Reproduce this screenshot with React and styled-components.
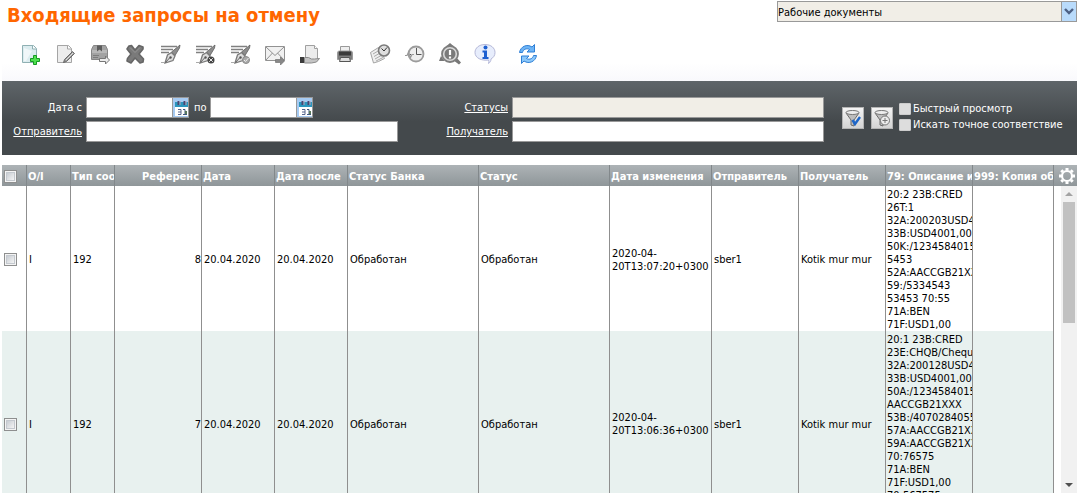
import React from 'react';
import styled, { createGlobalStyle, css } from 'styled-components';

const GlobalStyle = createGlobalStyle`
  * {
    box-sizing: border-box;
  }

  body {
    margin: 0;
    background: #ffffff;
    color: #000000;
    font-family: Tahoma, "DejaVu Sans Condensed", "DejaVu Sans", sans-serif;
    font-size: 11px;
    line-height: 13px;
  }

  input, select, button {
    font: inherit;
  }
`;

const Page = styled.div`
  display: flex;
  flex-direction: column;
  height: 100vh;
  padding: 0 5px 6px 2px;
`;

const Header = styled.header`
  display: flex;
  justify-content: space-between;
  align-items: flex-start;
  height: 36px;
  padding-top: 1px;
`;

const Title = styled.h1`
  margin: 0;
  padding: 2px 0 0 5px;
  color: #ff6600;
  font-size: 20px;
  font-weight: bold;
  line-height: 24px;
  white-space: nowrap;
`;

const SelectBox = styled.div`
  display: grid;
  grid-template-columns: 1fr 15px;
  width: 300px;
  height: 21px;
  border: 1px solid #999999;
  background: #f1eee7;

  select {
    grid-area: 1 / 1 / 2 / 3;
    appearance: none;
    width: 100%;
    padding: 1px 0 0;
    border: 0;
    border-radius: 0;
    background: transparent;
    color: #000000;
  }
`;

const SelectArrow = styled.span`
  grid-area: 1 / 2;
  display: flex;
  align-items: center;
  justify-content: center;
  border-left: 1px solid #999999;
  background: #b9dbfb;
  pointer-events: none;
`;

const Toolbar = styled.div`
  display: flex;
  align-items: center;
  gap: 13px;
  height: 45px;
  padding: 0 0 9px 17px;
  background: linear-gradient(#ffffff 60%, #f9f9fc);
`;

const ToolButton = styled.button`
  width: 22px;
  height: 22px;
  flex: none;
  padding: 0;
  border: 0;
  background: none;
  margin-left: ${({ $apart }) => ($apart ? '8px' : '0')};

  svg {
    display: block;
  }
`;

const FilterPanel = styled.form`
  display: grid;
  grid-template-columns: 80px 1fr 106px 1fr 249px;
  grid-template-rows: 21px 21px;
  column-gap: 4px;
  row-gap: 3px;
  height: 74px;
  padding-top: 16px;
  background: linear-gradient(#5f6569, #44494c 55%, #44494c);
  color: #ffffff;
`;

const FieldLabel = styled.label`
  justify-self: end;
  align-self: center;
`;

const FieldLink = styled.a`
  justify-self: end;
  align-self: center;
  color: #ffffff;
  text-decoration: underline;
`;

const TextField = styled.input`
  width: 100%;
  height: 21px;
  min-width: 0;
  padding: 0 2px;
  border: 1px solid #999999;
  border-radius: 0;
  background: ${({ readOnly }) => (readOnly ? '#f1eee7' : '#ffffff')};
`;

const DateRange = styled.div`
  display: flex;
  align-items: center;

  label {
    padding: 0 3px 0 5px;
  }
`;

const DateBox = styled.div`
  display: flex;
  width: 103px;
  height: 21px;
  border: 1px solid #999999;
  background: #ffffff;

  input {
    flex: 1;
    min-width: 0;
    padding: 0 2px;
    border: 0;
    background: transparent;
  }

  button {
    width: 16px;
    padding: 0;
    border: 0;
    border-left: 1px solid #999999;
    background: #a6cbf3;
  }

  svg {
    display: block;
  }
`;

const FilterActions = styled.div`
  grid-area: 1 / 5 / 3 / 6;
  display: flex;
  align-items: flex-start;
  padding-left: 14px;
`;

const FilterButton = styled.button`
  width: 22px;
  height: 22px;
  flex: none;
  margin: 10px 7px 0 0;
  padding: 0;
  border: 1px solid #b4b4b4;
  background: linear-gradient(#f4f4f4, #d4d4d4);

  svg {
    display: block;
  }

  & + & {
    margin-right: 6px;
  }
`;

const Options = styled.div`
  display: flex;
  flex-direction: column;
  gap: 3px;
  padding-top: 5px;
`;

const Option = styled.label`
  display: flex;
  align-items: center;
  gap: 2px;
  height: 13px;
  white-space: nowrap;

  input {
    appearance: none;
    width: 12px;
    height: 12px;
    margin: 0;
    border: 1px solid #cccccc;
    border-radius: 1px;
    background: #dddddd;
  }
`;

const Grid = styled.section`
  position: relative;
  flex: 1;
  min-height: 0;
  margin-top: 10px;
  overflow: hidden;
`;

const Table = styled.table`
  width: 100%;
  table-layout: fixed;
  border-collapse: separate;
  border-spacing: 0;
`;

const cell = css`
  overflow: hidden;
  border-right: 1px solid #8f8f8f;
  text-align: ${({ $right }) => ($right ? 'right' : 'left')};
`;

const HeadRow = styled.tr`
  background: linear-gradient(#adb3b6, #8f9699);
`;

const HeadCell = styled.th`
  ${cell}
  height: 21px;
  padding: 1px ${({ $right }) => ($right ? '2px' : '0')} 0 1px;
  border-right-color: #82888b;
  color: #ffffff;
  font-weight: bold;
  white-space: nowrap;

  &:last-child {
    border-right: 0;
  }
`;

const BodyRow = styled.tr`
  height: ${({ $height }) => $height}px;

  td {
    background: ${({ $striped }) => ($striped ? '#e8f1ef' : '#ffffff')};
  }

  td:last-child {
    border-right: 0;
    background: #ffffff;
  }
`;

const Cell = styled.td`
  ${cell}
  padding: 2px 0 0 ${({ $details }) => ($details ? '1px' : '2px')};
  vertical-align: ${({ $details }) => ($details ? 'top' : 'middle')};
  white-space: ${({ $details }) => ($details ? 'pre' : 'normal')};
`;

const RowCheck = styled.input`
  display: block;
  appearance: none;
  width: 13px;
  height: 13px;
  margin: 0 0 0 1px;
  padding: 2px;
  border: 1px solid #8e8f8f;
  background: linear-gradient(135deg, #c8cdd3, #f4f4f4) content-box, #f4f4f4;
  box-shadow: inset 0 0 0 1px #f4f4f4, inset 0 0 0 2px #c4c9cf;

  td & {
    margin-left: 0;
  }
`;

const GearButton = styled.button`
  display: block;
  width: 18px;
  height: 18px;
  margin-left: 3px;
  padding: 0;
  border: 0;
  background: none;

  svg {
    display: block;
  }
`;

// Lies over the last, empty column
const ScrollBar = styled.div`
  position: absolute;
  top: 21px;
  right: 0;
  bottom: 0;
  display: flex;
  flex-direction: column;
  width: 16px;
  background: #f1f1f1;
`;

const ScrollButton = styled.button`
  display: flex;
  align-items: center;
  justify-content: center;
  height: 16px;
  flex: none;
  padding: 0;
  border: 0;
  background: none;
`;

const ScrollTrack = styled.div`
  flex: 1;
  padding: 0 2px;
`;

const ScrollThumb = styled.div`
  height: 44%;
  background: #c1c1c1;
`;

const Svg = ({ size = 22, children }) => (
  <svg width={size} height={size} viewBox={`0 0 ${size} ${size}`} fill="none" aria-hidden="true">
    {children}
  </svg>
);

const Sheet = ({ stroke = '#a5a5a5', fill = '#f3f3f3' }) => (
  <>
    <path d="M3.500 2.500h11l3 3v14h-14z" fill={fill} stroke={stroke} />
    <path d="M13.500 2.500v3.500h4" fill="#fff" stroke={stroke} />
  </>
);

const Quill = () => (
  <>
    <path d="M2 3.500h16M2 6.500h12M2 9.500h8" stroke="#808080" strokeWidth="1.300" />
    <path d="M21 2L12.500 9l3.500 3.500L20.500 5z" fill="#8d8d8d" stroke="#5e5e5e" strokeWidth=".8" />
    <path d="M12.500 9.500L8.500 12 6 20l8-2.500 2-4.500z" fill="#dcdcdc" stroke="#7a7a7a" strokeWidth="1.300" />
    <path d="M6.500 19.500l4-4.500" stroke="#666" />
    <circle cx="11.500" cy="14.500" r="1.200" fill="#555" />
    <path d="M2 19.500h4" stroke="#aaa" />
  </>
);

const NewIcon = () => (
  <Svg>
    <Sheet stroke="#8fb0b3" fill="#dcecef" />
    <path d="M5 18V5l8 3-6 10z" fill="#fff" opacity=".6" />
    <path d="M14.500 12.500h3v3h3v3h-3v3h-3v-3h-3v-3h3z" fill="#4ee04e" stroke="#159a22" />
  </Svg>
);

const EditIcon = () => (
  <Svg>
    <Sheet fill="#ededed" />
    <path d="M9.500 19.500l1-3 8-8 2 2-8 8z" fill="#9a9a9a" stroke="#555" strokeWidth=".8" />
    <path d="M12 17l7-7" stroke="#e2e2e2" />
  </Svg>
);

const BoxIcon = () => (
  <Svg>
    <path d="M2.500 6.500l2-4h12l2 4v10h-16z" fill="#a2a2a2" stroke="#868686" />
    <path d="M3 7h15v3H3z" fill="#b8b8b8" />
    <path d="M8 2.500h5v6l-2.500-2-2.500 2z" fill="#5c5c5c" />
    <path d="M4 12.500h6M4 14.500h5" stroke="#7c7c7c" />
    <path d="M10.500 15.500h6v-2.500l4 4-4 4v-2.500h-6z" fill="#ececec" stroke="#777" />
  </Svg>
);

const DeleteIcon = () => (
  <Svg>
    <path d="M5 3l2.500-.5L11 7l4-4.500 4 1.500v2l-4 5 4.500 5-.5 3-3 1L11 15l-4 5-4-2 .5-2.500L7 11 3 6z" fill="#7a7a7a" stroke="#666" strokeWidth="1.600" strokeLinejoin="round" />
    <path d="M6 4.500l5 5 5-5" stroke="#969696" />
  </Svg>
);

const SignIcon = () => (
  <Svg>
    <Quill />
  </Svg>
);

const UnsignIcon = () => (
  <Svg>
    <Quill />
    <circle cx="17" cy="17" r="3.500" fill="#444" />
    <path d="M15.200 15.200l3.600 3.600M18.800 15.200l-3.600 3.600" stroke="#e8e8e8" />
  </Svg>
);

const VerifyIcon = () => (
  <Svg>
    <Quill />
    <circle cx="17" cy="17" r="3.500" fill="#aaa" stroke="#8a8a8a" />
    <path d="M15 17l1.500 1.500 3-3.500" stroke="#eee" />
  </Svg>
);

const MailIcon = () => (
  <Svg>
    <path d="M1.500 3.500h19v14h-19z" fill="#f1f1f1" stroke="#929292" />
    <path d="M2 4l9 8.500L20 4M2 17l6.500-7M20 17l-6.500-7" stroke="#929292" />
    <path d="M11.500 16.500h5v-2.500l4 4-4 4v-2.500h-5z" fill="#888" stroke="#666" strokeWidth=".6" />
  </Svg>
);

const HandIcon = () => (
  <Svg>
    <path d="M6.500 2.500h9l3 3v11h-12z" fill="#ececec" stroke="#a0a0a0" />
    <path d="M15.500 2.500v3h3" stroke="#a0a0a0" fill="#fff" />
    <path d="M1 14h4v6H1z" fill="#3b3b3b" />
    <path d="M5.500 14.500h4l3 1.500h3l5-.5-3 3.500-5 1h-7z" fill="#c4c4c4" stroke="#8a8a8a" />
  </Svg>
);

const PrintIcon = () => (
  <Svg>
    <path d="M6.500 3.500h9v6h-9z" fill="#eee" stroke="#999" />
    <path d="M3.500 9.500q0-1.500 2-1.500h11q2 0 2 1.500v7h-15z" fill="#7d7d7d" stroke="#9a9a9a" />
    <path d="M5 8.500h12v4H5z" fill="#3a3a3a" />
    <path d="M6.500 14.500h9l1 4h-11z" fill="#ddd" stroke="#555" />
  </Svg>
);

const ScheduleIcon = () => (
  <Svg>
    <path d="M1.500 9.500l8-5 6 11-6 3-5 1.500z" fill="#efefef" stroke="#a5a5a5" />
    <path d="M4 11l6-3.500M5 13.500l7-4M6 16l7-4M7 18l7-3.500" stroke="#aaa" />
    <circle cx="15" cy="7.500" r="5.500" fill="#dedede" stroke="#7a7a7a" strokeWidth="1.600" />
    <path d="M12.500 5.500L15 8l3-3.500" stroke="#333" />
  </Svg>
);

const HistoryIcon = () => (
  <Svg>
    <circle cx="12" cy="11" r="7.500" fill="#eee" stroke="#9c9c9c" strokeWidth="1.800" />
    <path d="M12.500 5v6.500h5M6 11.500h1" stroke="#555" />
    <path d="M1 12.500h2l1.500-3 2 5 1.500-3h2" stroke="#999" strokeWidth="1.200" />
  </Svg>
);

const InspectIcon = () => (
  <Svg>
    <path d="M11 0l4 3.500H7zM0 18l2-5 3.500 5zM14 17l3-3 5 5.500-2 2z" fill="#777" />
    <circle cx="11" cy="11" r="8" fill="#d9d9d9" stroke="#7d7d7d" strokeWidth="1.800" />
    <circle cx="11" cy="11" r="5.500" fill="#7a7a7a" />
    <path d="M11 7v5M11 13.500v2" stroke="#fff" strokeWidth="2.200" />
  </Svg>
);

const InfoIcon = () => (
  <Svg>
    <path d="M11 1.500c6 0 10 3.500 10 8 0 3-1.500 5-4 6.500 0 2-1 3.500-2.500 4.500.5-1.500.5-2.500 0-3.500-7 1-13.500-2-13.500-7.500 0-4.500 4-8 10-8z" fill="#e7edfc" stroke="#b5b8d8" />
    <path d="M8.500 7.500h4.500v6.500h1.500v2H8.500v-2H10v-4.500H8.500z" fill="#1d5fd0" />
    <circle cx="11.500" cy="4.500" r="2" fill="#1d5fd0" />
  </Svg>
);

const RefreshIcon = () => (
  <Svg>
    <path d="M2.500 9.500C3.500 3.500 10 .5 15 4l2.500-2.500V9H10l2.500-2.500C9.500 4.800 6 6.500 5.500 9.500z" fill="#6db4f5" stroke="#2f7fd6" strokeLinejoin="round" />
    <path d="M19.500 12.500c-1 6-7.500 9-12.500 5.500L4.500 20.500V13H12l-2.500 2.500c3 1.700 6.500 0 7-3z" fill="#8cc8fa" stroke="#2f7fd6" strokeLinejoin="round" />
  </Svg>
);

const CalendarIcon = () => (
  <svg width="15" height="19" viewBox="0 0 15 19" fill="none" aria-hidden="true">
    <path d="M2 4h13v5H2z" fill="#2b95bd" />
    <path d="M2 9h13v9H2z" fill="#fff" />
    <path d="M5.500 3v4M11.500 3v4" stroke="#4b4470" strokeWidth="2" />
    <path d="M7 3v4M13 3v4" stroke="#b9a6b8" />
    <path d="M5 11.500h3v5M5 14h3M5 16.500h3" stroke="#55658c" />
    <path d="M10 11.500h2v5M10 16.500h4" stroke="#3f587f" />
    <path d="M12 13h2v3h-2z" fill="#58785c" />
  </svg>
);

const Funnel = () => (
  <>
    <path d="M3 5l5 7v5l3 1v-6l5-7z" fill="#bdbdbd" stroke="#6c6c6c" />
    <ellipse cx="9.500" cy="4.500" rx="6.500" ry="2" fill="#ededed" stroke="#777" />
  </>
);

const ApplyFilterIcon = () => (
  <Svg size={20}>
    <Funnel />
    <path d="M9.500 12l2.500 4 5-7" stroke="#1e66c8" strokeWidth="2.400" />
  </Svg>
);

const AddFilterIcon = () => (
  <Svg size={20}>
    <Funnel />
    <circle cx="13" cy="12.500" r="4.500" fill="#ececec" stroke="#777" />
    <path d="M13 10v5M10.500 12.500h5" stroke="#777" />
  </Svg>
);

const GearIcon = () => (
  <Svg size={18}>
    <circle cx="9" cy="9" r="5" stroke="#fff" strokeWidth="2.200" />
    <path d="M9 1v2.500M9 14.500V17M1 9h2.500M14.500 9H17M3.300 3.300l1.700 1.700M13 13l1.700 1.700M3.300 14.700L5 13M13 5l1.700-1.700" stroke="#fff" strokeWidth="3" />
  </Svg>
);

const tools = [
  { label: 'Создать', Icon: NewIcon },
  { label: 'Редактировать', Icon: EditIcon },
  { label: 'В архив', Icon: BoxIcon },
  { label: 'Удалить', Icon: DeleteIcon },
  { label: 'Подписать', Icon: SignIcon },
  { label: 'Снять подпись', Icon: UnsignIcon },
  { label: 'Проверить подпись', Icon: VerifyIcon },
  { label: 'Отправить', Icon: MailIcon },
  { label: 'Передать', Icon: HandIcon },
  { label: 'Печать', Icon: PrintIcon },
  { label: 'Расписание', Icon: ScheduleIcon },
  { label: 'История', Icon: HistoryIcon },
  { label: 'Просмотр ошибок', Icon: InspectIcon },
  { label: 'Информация', Icon: InfoIcon },
  { label: 'Обновить', Icon: RefreshIcon, apart: true },
];

const columns = [
  { key: 'direction', title: 'О/I', width: 44 },
  { key: 'type', title: 'Тип соо', width: 44 },
  { key: 'reference', title: 'Референс', width: 87, right: true },
  { key: 'date', title: 'Дата', width: 73 },
  { key: 'lastDate', title: 'Дата после', width: 73 },
  { key: 'bankStatus', title: 'Статус Банка' },
  { key: 'status', title: 'Статус' },
  { key: 'changed', title: 'Дата изменения', width: 102 },
  { key: 'sender', title: 'Отправитель', width: 87 },
  { key: 'receiver', title: 'Получатель', width: 87 },
  { key: 'details', title: '79: Описание и', width: 87, details: true },
  { key: 'copy', title: '999: Копия об', width: 81 },
];

const rows = [
  {
    height: 145,
    direction: 'I',
    type: '192',
    reference: '8',
    date: '20.04.2020',
    lastDate: '20.04.2020',
    bankStatus: 'Обработан',
    status: 'Обработан',
    changed: '2020-04-20T13:07:20+0300',
    sender: 'sber1',
    receiver: 'Kotik mur mur',
    details: [
      '20:2 23B:CRED',
      '26T:1',
      '32A:200203USD4',
      '33B:USD4001,00',
      '50K:/1234584015',
      '5453',
      '52A:AACCGB21XX',
      '59:/5334543',
      '53453 70:55',
      '71A:BEN',
      '71F:USD1,00',
    ].join('\n'),
  },
  {
    height: 184,
    direction: 'I',
    type: '192',
    reference: '7',
    date: '20.04.2020',
    lastDate: '20.04.2020',
    bankStatus: 'Обработан',
    status: 'Обработан',
    changed: '2020-04-20T13:06:36+0300',
    sender: 'sber1',
    receiver: 'Kotik mur mur',
    details: [
      '20:1 23B:CRED',
      '23E:CHQB/Chequ',
      '32A:200128USD4',
      '33B:USD4001,00',
      '50A:/1234584015',
      'AACCGB21XXX',
      '53B:/4070284055',
      '57A:AACCGB21XX',
      '59A:AACCGB21XX',
      '70:76575',
      '71A:BEN',
      '71F:USD1,00',
      '70:567575',
    ].join('\n'),
  },
];

const DateField = ({ id }) => (
  <DateBox>
    <input id={id} type="text" />
    <button type="button" aria-label="Открыть календарь">
      <CalendarIcon />
    </button>
  </DateBox>
);

const Filters = () => (
  <FilterPanel onSubmit={(e) => e.preventDefault()}>
    <FieldLabel htmlFor="date-from">Дата с</FieldLabel>
    <DateRange>
      <DateField id="date-from" />
      <label htmlFor="date-to">по</label>
      <DateField id="date-to" />
    </DateRange>
    <FieldLink href="#statuses" id="statuses-label">Статусы</FieldLink>
    <TextField type="text" aria-labelledby="statuses-label" readOnly />
    <FieldLink href="#sender" id="sender-label">Отправитель</FieldLink>
    <TextField type="text" aria-labelledby="sender-label" />
    <FieldLink href="#receiver" id="receiver-label">Получатель</FieldLink>
    <TextField type="text" aria-labelledby="receiver-label" />
    <FilterActions>
      <FilterButton type="submit" aria-label="Применить фильтр">
        <ApplyFilterIcon />
      </FilterButton>
      <FilterButton type="button" aria-label="Добавить фильтр">
        <AddFilterIcon />
      </FilterButton>
      <Options>
        <Option>
          <input type="checkbox" />
          Быстрый просмотр
        </Option>
        <Option>
          <input type="checkbox" />
          Искать точное соответствие
        </Option>
      </Options>
    </FilterActions>
  </FilterPanel>
);

const Requests = () => (
  <Grid>
    <Table>
      <colgroup>
        <col width="25" />
        {columns.map((c) => (
          <col key={c.key} width={c.width} />
        ))}
        <col width="23" />
      </colgroup>
      <thead>
        <HeadRow>
          <HeadCell>
            <RowCheck type="checkbox" aria-label="Выбрать все" />
          </HeadCell>
          {columns.map((c) => (
            <HeadCell key={c.key} $right={c.right}>
              {c.title}
            </HeadCell>
          ))}
          <HeadCell>
            <GearButton type="button" aria-label="Настройки">
              <GearIcon />
            </GearButton>
          </HeadCell>
        </HeadRow>
      </thead>
      <tbody>
        {rows.map((row, i) => (
          <BodyRow key={row.reference} $height={row.height} $striped={i % 2 === 1}>
            <Cell>
              <RowCheck type="checkbox" aria-label={`Выбрать ${row.reference}`} />
            </Cell>
            {columns.map((c) => (
              <Cell key={c.key} $right={c.right} $details={c.details}>
                {row[c.key]}
              </Cell>
            ))}
            <Cell />
          </BodyRow>
        ))}
      </tbody>
    </Table>
    <ScrollBar>
      <ScrollButton type="button" aria-label="Вверх">
        <svg width="8" height="4" viewBox="0 0 8 4">
          <path d="M0 4l4-4 4 4z" fill="#a3a3a3" />
        </svg>
      </ScrollButton>
      <ScrollTrack>
        <ScrollThumb />
      </ScrollTrack>
      <ScrollButton type="button" aria-label="Вниз">
        <svg width="8" height="4" viewBox="0 0 8 4">
          <path d="M0 0l4 4 4-4z" fill="#505050" />
        </svg>
      </ScrollButton>
    </ScrollBar>
  </Grid>
);

const App = () => (
  <>
    <GlobalStyle />
    <Page>
      <Header>
        <Title>Входящие запросы на отмену</Title>
        <SelectBox>
          <select aria-label="Набор документов">
            <option>Рабочие документы</option>
          </select>
          <SelectArrow>
            <svg width="10" height="7" viewBox="0 0 10 7" fill="none">
              <path d="M1 1l4 4 4-4" stroke="#4d6185" strokeWidth="2.400" />
            </svg>
          </SelectArrow>
        </SelectBox>
      </Header>
      <Toolbar>
        {tools.map(({ label, Icon, apart }) => (
          <ToolButton key={label} type="button" title={label} $apart={apart}>
            <Icon />
          </ToolButton>
        ))}
      </Toolbar>
      <Filters />
      <Requests />
    </Page>
  </>
);

export default App;
